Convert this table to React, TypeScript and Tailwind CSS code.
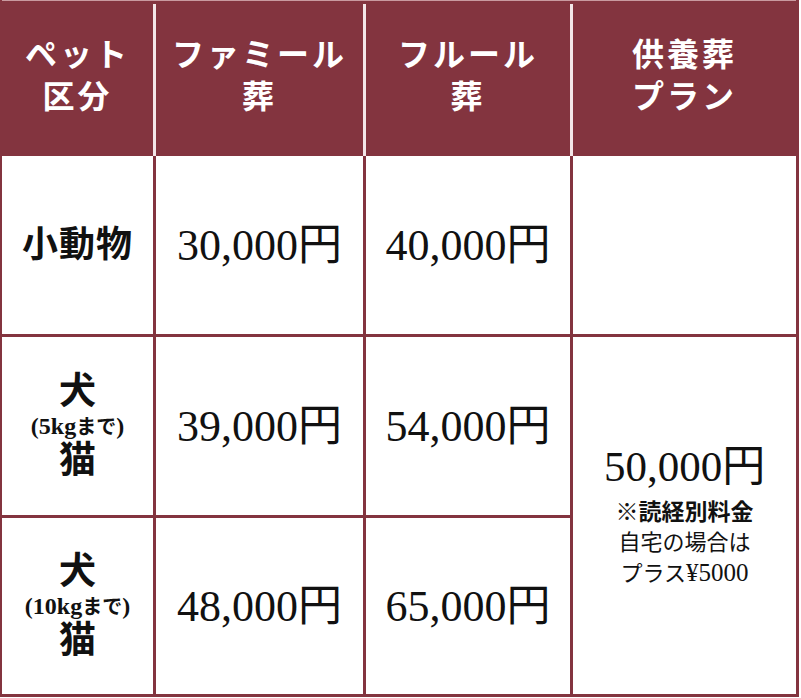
const font = { fontFamily: '"Liberation Serif", "Noto Sans CJK JP", serif' }

function HeadCell({ lines, w }: { lines: string[]; w: string }) {
  return (
    <div className={`${w} flex flex-col items-center justify-center text-white font-bold text-[32px] leading-[42px] tracking-[3px] pb-[6px]`}>
      {lines.map((l) => (
        <span key={l}>{l}</span>
      ))}
    </div>
  )
}

function Divider() {
  return <div className="w-[3px] self-stretch mt-[3px] bg-[#f3e6e8]" />
}

function Price({ value }: { value: string }) {
  return (
    <div className="bg-white flex items-center justify-center text-[44px] text-[#111] pt-[2px]">
      {value}
    </div>
  )
}

function PetCell({ weight }: { weight: string }) {
  return (
    <div className="bg-white flex flex-col items-center justify-center text-[#111] font-bold">
      <span className="text-[37px] leading-[38px]">犬</span>
      <span className="text-[20px] leading-[30px]">
        <span className="text-[24px]">{weight.replace("まで)", "")}</span>
        まで
        <span className="text-[24px]">)</span>
      </span>
      <span className="text-[37px] leading-[38px]">猫</span>
    </div>
  )
}

export default function App() {
  return (
    <div className="w-[801px] h-[698px] bg-white" style={font}>
      <div className="w-[799px] h-[697px] bg-[#83343f] pl-[2px] pr-[3px] pb-[3px] flex flex-col">
        <div className="h-[156px] flex border-t border-[#c99aa0]">
          <HeadCell lines={["ペット", "区分"]} w="w-[151px]" />
          <Divider />
          <HeadCell lines={["ファミール", "葬"]} w="w-[207px]" />
          <Divider />
          <HeadCell lines={["フルール", "葬"]} w="w-[204px]" />
          <Divider />
          <HeadCell lines={["供養葬", "プラン"]} w="w-[223px]" />
        </div>
        <div className="flex-1 grid grid-cols-[151px_207px_204px_223px] grid-rows-[178px_178px_176px] gap-[3px]">
          <div className="bg-white flex items-center justify-center text-[#111] font-bold text-[36px] tracking-[1px]">
            小動物
          </div>
          <Price value="30,000円" />
          <Price value="40,000円" />
          <div className="bg-white" />

          <PetCell weight="(5kgまで)" />
          <Price value="39,000円" />
          <Price value="54,000円" />
          <div className="bg-white row-span-2 flex flex-col items-center justify-center text-[#111]">
            <span className="text-[43px] leading-[50px]">50,000円</span>
            <span className="mt-[6px] text-[23px] leading-[30px] font-bold">※読経別料金</span>
            <span className="text-[22px] leading-[30px]">自宅の場合は</span>
            <span className="text-[22px] leading-[30px]">
              プラス<span className="text-[25px]">¥5000</span>
            </span>
          </div>

          <PetCell weight="(10kgまで)" />
          <Price value="48,000円" />
          <Price value="65,000円" />
        </div>
      </div>
    </div>
  )
}
